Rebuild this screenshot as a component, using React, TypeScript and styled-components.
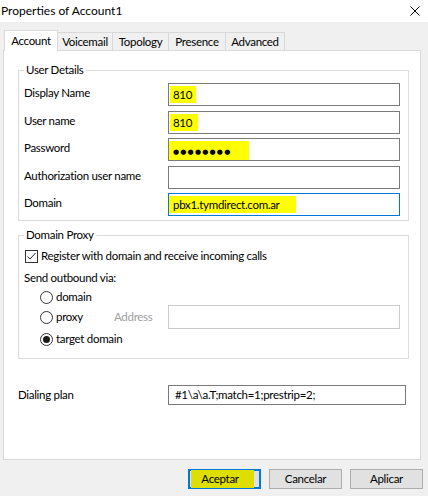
import React from 'react'
import styled, {createGlobalStyle} from 'styled-components'

const GlobalStyle = createGlobalStyle`
  html, body {
    margin: 0;
    padding: 0;
    background: #f0f0f0;
  }

  body {
    font-family: Lato, "Liberation Sans", sans-serif;
    font-size: 11.5px;
    letter-spacing: -0.3px;
    color: #000;
  }
`

type TabInfo = {
  name: string
  width: number
}

const tabs: TabInfo[] = [
  {name: 'Account', width: 54},
  {name: 'Voicemail', width: 55},
  {name: 'Topology', width: 56},
  {name: 'Presence', width: 57},
  {name: 'Advanced', width: 59},
]

const CloseGlyph = () => (
  <svg width="10" height="10" viewBox="0 0 10 10">
    <path d="M0.5 0.5 L9.5 9.5 M9.5 0.5 L0.5 9.5" stroke="#000" strokeWidth="1" fill="none" />
  </svg>
)

const CheckGlyph = () => (
  <svg width="11" height="11" viewBox="0 0 11 11">
    <path d="M1.5 5.5 L4 8 L9.5 2" stroke="#222" strokeWidth="1" fill="none" />
  </svg>
)

export default function App() {
  return (
    <Window>
      <GlobalStyle />
      <TitleBar>
        <Caption>Properties of Account1</Caption>
        <CloseButton><CloseGlyph /></CloseButton>
      </TitleBar>

      <Body>
        <TabStrip>
          {tabs.map((tab, i) => (
            <Tab key={tab.name} $width={tab.width} $active={i === 0} $first={i === 0}>
              {tab.name}
            </Tab>
          ))}
        </TabStrip>

        <Panel>
          <Group $bottom={4}>
            <Legend>User Details</Legend>
            <FormGrid>
              <Label>Display Name</Label>
              <Field><Mark $left={3} $right={4}>810</Mark></Field>

              <Label>User name</Label>
              <Field><Mark $left={3} $right={6}>810</Mark></Field>

              <Label>Password</Label>
              <Field><Mark $left={7} $right={18}><Dots>●●●●●●●●</Dots></Mark></Field>

              <Label>Authorization user name</Label>
              <Field />

              <Label>Domain</Label>
              <Field $focused><Mark $left={4} $right={16}>pbx1.tymdirect.com.ar</Mark></Field>
            </FormGrid>
          </Group>

          <Group $gap $bottom={11}>
            <Legend>Domain Proxy</Legend>
            <CheckRow>
              <CheckBox><CheckGlyph /></CheckBox>
              Register with domain and receive incoming calls
            </CheckRow>
            <SectionLabel>Send outbound via:</SectionLabel>
            <RadioRow $top={3}>
              <Radio />
              domain
            </RadioRow>
            <ProxyRow>
              <RadioRow>
                <Radio />
                proxy
              </RadioRow>
              <DisabledLabel>Address</DisabledLabel>
              <Field $disabled $height={24} />
            </ProxyRow>
            <RadioRow $top={2}>
              <Radio $checked />
              target domain
            </RadioRow>
          </Group>

          <PlanRow>
            <Label>Dialing plan</Label>
            <Field $height={20} $pad={1} $inset={6}>#1\a\a.T;match=1;prestrip=2;</Field>
          </PlanRow>
        </Panel>
      </Body>

      <ButtonRow>
        <Button $default>
          <Mark $left={10} $right={15} $color="#dede00" $height={18}>Aceptar</Mark>
        </Button>
        <Button>Cancelar</Button>
        <Button>Aplicar</Button>
      </ButtonRow>
    </Window>
  )
}

const Window = styled.div`
  display: flex;
  flex-direction: column;
  width: 428px;
  height: 496px;
  background: #f0f0f0;
  overflow: hidden;
`

const TitleBar = styled.div`
  display: flex;
  align-items: center;
  justify-content: space-between;
  height: 22px;
  padding: 0 8px 0 1px;
  background: #fff;
`

const Caption = styled.span`
  font-size: 12px;
  letter-spacing: 0;
  line-height: 16px;
`

const CloseButton = styled.div`
  display: flex;
  width: 10px;
  height: 10px;
`

const Body = styled.div`
  display: flex;
  flex-direction: column;
  padding: 8px 7px 0 3px;
`

const TabStrip = styled.div`
  position: relative;
  z-index: 1;
  display: flex;
  align-items: flex-end;
  height: 20px;
  padding-left: 1px;
`

const Tab = styled.div<{$width: number; $active?: boolean; $first?: boolean}>`
  display: flex;
  align-items: center;
  justify-content: center;
  box-sizing: border-box;
  width: ${({$width}) => $width}px;
  height: ${({$active}) => ($active ? 21 : 18)}px;
  margin-bottom: ${({$active}) => ($active ? -1 : 0)}px;
  border: 1px solid #d9d9d9;
  border-bottom: none;
  border-left-width: ${({$first}) => ($first ? 1 : 0)}px;
  background: ${({$active}) => ($active ? '#fff' : '#f0f0f0')};
  line-height: 16px;
  white-space: nowrap;
`

const Panel = styled.div`
  display: flex;
  flex-direction: column;
  box-sizing: border-box;
  width: 418px;
  height: 410px;
  padding: 11px 0 0 14px;
  border: 1px solid #d9d9d9;
  background: #fff;
`

const Group = styled.fieldset<{$gap?: boolean; $bottom: number}>`
  box-sizing: border-box;
  width: 391px;
  min-width: 0;
  margin: ${({$gap}) => ($gap ? 6 : 0)}px 0 0 0;
  padding: 4px 8px ${({$bottom}) => $bottom}px 5px;
  border: 1px solid #dcdcdc;
`

const Legend = styled.legend`
  padding: 0 2px;
  line-height: 16px;
`

const FormGrid = styled.div`
  display: grid;
  grid-template-columns: 144px 232px;
  row-gap: 4.5px;
  padding-top: 1px;
`

const Label = styled.div`
  padding-top: 2px;
  line-height: 16px;
  white-space: nowrap;
`

const Field = styled.div<{$focused?: boolean; $disabled?: boolean; $height?: number; $pad?: number; $inset?: number}>`
  display: flex;
  align-items: flex-start;
  box-sizing: border-box;
  height: ${({$height}) => $height ?? 23}px;
  padding: ${({$pad}) => $pad ?? 2}px 4px 0 ${({$inset}) => $inset ?? 4}px;
  border: 1px solid ${({$focused, $disabled}) => ($focused ? '#0078d7' : $disabled ? '#cccccc' : '#7a7a7a')};
  background: #fff;
  line-height: 16px;
  white-space: nowrap;
  overflow: hidden;
`

const Mark = styled.span<{$left: number; $right: number; $color?: string; $height?: number}>`
  display: inline-block;
  margin-left: -${({$left}) => $left}px;
  padding: 0 ${({$right}) => $right}px 0 ${({$left}) => $left}px;
  background: ${({$color}) => $color ?? '#ffff00'};
  line-height: ${({$height}) => $height ?? 17}px;
`

const Dots = styled.span`
  font-family: "DejaVu Sans", sans-serif;
  font-size: 7px;
  letter-spacing: 1.2px;
`

const CheckRow = styled.div`
  display: flex;
  align-items: center;
  gap: 3px;
  height: 16px;
  margin-top: 1px;
  padding-left: 1px;
  line-height: 16px;
`

const CheckBox = styled.div`
  display: flex;
  align-items: center;
  justify-content: center;
  box-sizing: border-box;
  width: 13px;
  height: 13px;
  border: 1px solid #333;
  background: #fff;
`

const SectionLabel = styled.div`
  margin-top: 6px;
  line-height: 16px;
`

const RadioRow = styled.div<{$top?: number}>`
  display: flex;
  align-items: center;
  gap: 3px;
  height: 16px;
  margin-top: ${({$top}) => $top ?? 0}px;
  padding-left: 16px;
  line-height: 16px;
`

const Radio = styled.div<{$checked?: boolean}>`
  display: flex;
  align-items: center;
  justify-content: center;
  box-sizing: border-box;
  width: 13px;
  height: 13px;
  border: 1px solid #333;
  border-radius: 50%;
  background: #fff;

  &::after {
    content: '';
    display: ${({$checked}) => ($checked ? 'block' : 'none')};
    width: 7px;
    height: 7px;
    border-radius: 50%;
    background: #1a1a1a;
  }
`

const ProxyRow = styled.div`
  display: grid;
  grid-template-columns: 90px 54px 232px;
  align-items: center;
  height: 24px;

  & > ${RadioRow} {
    height: 24px;
  }
`

const DisabledLabel = styled.span`
  color: #a0a0a0;
  line-height: 16px;
`

const PlanRow = styled.div`
  display: grid;
  grid-template-columns: 150px 238px;
  align-items: start;
  margin-top: 26px;
`

const ButtonRow = styled.div`
  display: flex;
  justify-content: flex-end;
  gap: 8px;
  margin-top: 9px;
  padding-right: 5px;
`

const Button = styled.button<{$default?: boolean}>`
  display: flex;
  align-items: center;
  justify-content: center;
  box-sizing: border-box;
  width: 73px;
  height: 20px;
  padding: 0 0 0 ${({$default}) => ($default ? 6 : 0)}px;
  border: ${({$default}) => ($default ? '2px solid #0078d7' : '1px solid #adadad')};
  background: #e1e1e1;
  color: #000;
  font-family: Lato, "Liberation Sans", sans-serif;
  font-size: 11.5px;
  letter-spacing: -0.3px;
  line-height: 16px;
`
